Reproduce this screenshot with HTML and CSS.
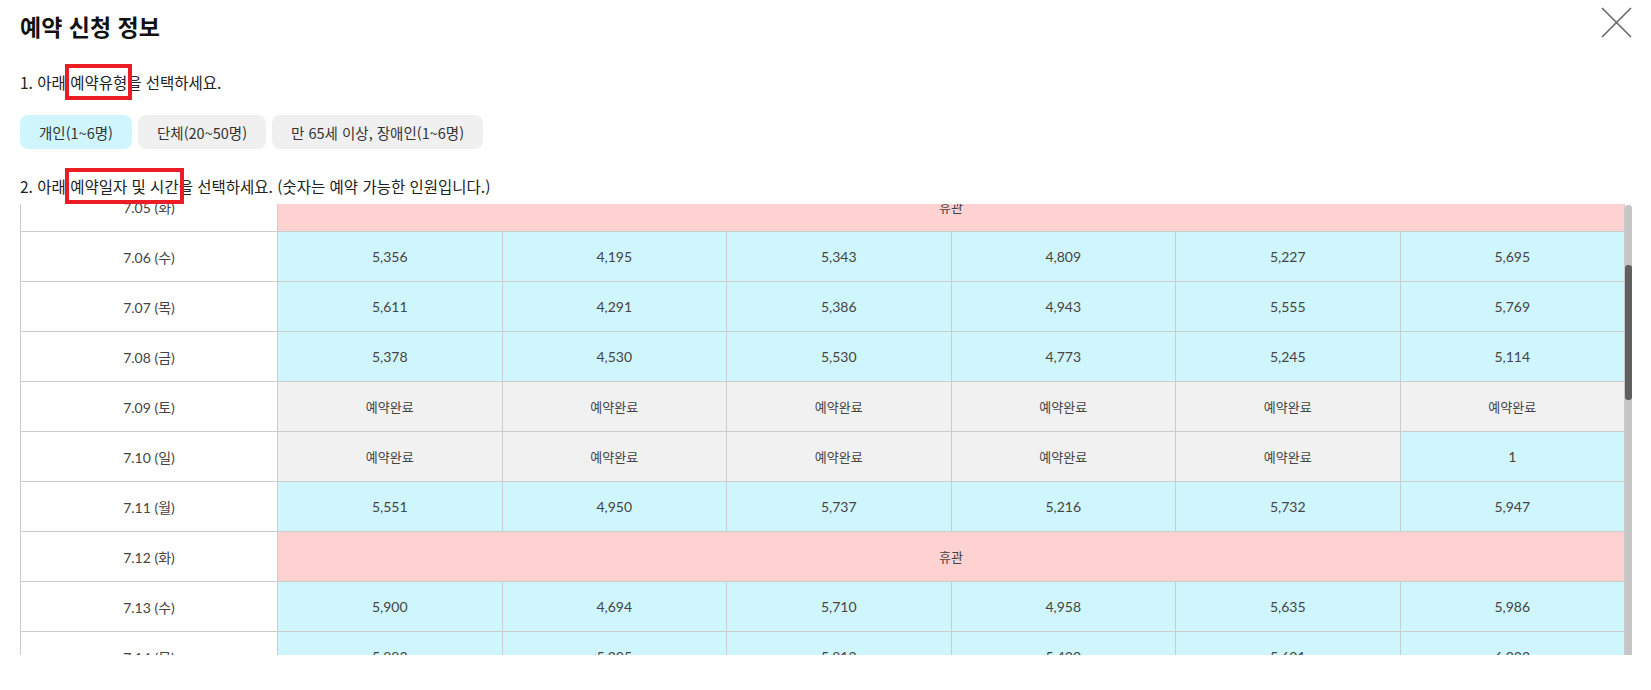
FILE: index.html
```html
<!DOCTYPE html>
<html lang="ko">
<head>
    <meta charset="UTF-8">
    <meta name="viewport" content="width=device-width, initial-scale=1.0">
    <title>예약 신청 정보</title>
    <link rel="stylesheet" href="styles.css">
</head>
<body>
    <div class="popup">
        <div class="popup-header">
            <h1>예약 신청 정보</h1>
            <button class="close-btn" type="button" aria-label="닫기">
                <svg width="31" height="31" viewBox="0 0 31 31">
                    <path d="M1 1 L30 30 M30 1 L1 30" stroke="#666" stroke-width="1.6" fill="none"/>
                </svg>
            </button>
        </div>

        <p class="step step-type">1. 아래 <span class="mark">예약유형</span>을 선택하세요.</p>

        <div class="type-tabs">
            <button type="button" class="type-btn active">개인(1~6명)</button>
            <button type="button" class="type-btn">단체(20~50명)</button>
            <button type="button" class="type-btn">만 65세 이상, 장애인(1~6명)</button>
        </div>

        <p class="step step-date">2. 아래 <span class="mark">예약일자 및 시간</span>을 선택하세요. (숫자는 예약 가능한 인원입니다.)</p>

        <div class="table-area">
            <div class="table-wrap" id="tableWrap">
                <table class="schedule">
                    <colgroup>
                        <col class="col-date">
                        <col><col><col><col><col><col>
                    </colgroup>
                    <tbody id="scheduleBody"></tbody>
                </table>
            </div>
            <div class="scrollbar">
                <div class="scrollbar-thumb"></div>
            </div>
        </div>
    </div>

    <script>
        document.addEventListener('DOMContentLoaded', function() {
            const body = document.getElementById('scheduleBody');
            const wrap = document.getElementById('tableWrap');
            const dayNames = ['일', '월', '화', '수', '목', '금', '토'];
            const X = 'x'; // 예약완료

            const fixed = {
                2: [X, X, X, X, X, X],
                3: [X, X, X, X, X, X],
                6: [5356, 4195, 5343, 4809, 5227, 5695],
                7: [5611, 4291, 5386, 4943, 5555, 5769],
                8: [5378, 4530, 5530, 4773, 5245, 5114],
                9: [X, X, X, X, X, X],
                10: [X, X, X, X, X, 1],
                11: [5551, 4950, 5737, 5216, 5732, 5947],
                13: [5900, 4694, 5710, 4958, 5635, 5986],
                14: [5883, 5205, 5813, 5420, 5601, 6022]
            };

            for (let d = 1; d <= 31; d++) {
                const dow = (5 + d - 1) % 7; // 2022.07.01 = 금
                const tr = document.createElement('tr');
                const label = '7.' + String(d).padStart(2, '0') + ' (' + dayNames[dow] + ')';
                let html = '<td class="date">' + label + '</td>';

                if (dow === 2) {
                    html += '<td class="closed" colspan="6">휴관</td>';
                } else {
                    let vals = fixed[d];
                    if (!vals) {
                        vals = [];
                        for (let i = 0; i < 6; i++) {
                            vals.push(4100 + ((d * 7919 + i * 1049) % 1900));
                        }
                    }
                    vals.forEach(function(v) {
                        if (v === X) {
                            html += '<td class="full">예약완료</td>';
                        } else {
                            html += '<td class="open">' + v.toLocaleString('en-US') + '</td>';
                        }
                    });
                }
                tr.innerHTML = html;
                body.appendChild(tr);
            }

            wrap.scrollTop = 223;
        });
    </script>
</body>
</html>
```

FILE: styles.css
```css
* {
    box-sizing: border-box;
}

body {
    margin: 0;
    padding: 0 19px 0 20px;
    background-color: #fff;
    color: #222;
    font-family: "Noto Sans CJK KR", "Noto Sans", sans-serif;
}

.popup-header {
    display: flex;
    justify-content: space-between;
    align-items: flex-start;
    padding-top: 7px;
}

h1 {
    margin: 3px 0 0;
    font-size: 23px;
    line-height: 32px;
    font-weight: 700;
    color: #111;
}

.close-btn {
    border: none;
    background: none;
    padding: 0;
    width: 31px;
    height: 31px;
    cursor: pointer;
}

.close-btn svg {
    display: block;
}

.step {
    margin: 0;
    font-size: 15.5px;
    line-height: 22px;
    color: #222;
}

.step-type {
    margin-top: 29px;
}

.step-date {
    margin-top: 26px;
}

/* red guide box */
.mark {
    padding: 2px 0;
    outline: 4px solid #ec1c24;
    outline-offset: 1px;
}

.type-tabs {
    display: flex;
    gap: 6px;
    margin-top: 22px;
}

.type-btn {
    height: 34px;
    padding: 0 19px;
    border: none;
    border-radius: 8px;
    background-color: #f0f0f0;
    color: #333;
    font-family: inherit;
    font-size: 14.5px;
    cursor: pointer;
}

.type-btn.active {
    background-color: #d0f6fd;
}

.table-area {
    display: flex;
    margin-top: 7px;
    height: 451px;
}

.table-wrap {
    flex: 1;
    overflow: hidden;
}

.scrollbar {
    width: 7px;
    margin-top: 1px;
    background-color: #c6c6c6;
    border-radius: 3px 3px 0 0;
}

.scrollbar-thumb {
    margin-top: 60px;
    height: 135px;
    background-color: #606060;
    border-radius: 3px;
}

.schedule {
    width: 100%;
    table-layout: fixed;
    border-collapse: collapse;
    font-family: Lato, "Noto Sans CJK KR", sans-serif;
    font-size: 14px;
    color: #444;
}

.col-date {
    width: 257px;
}

.schedule tr {
    height: 50px;
}

.schedule td {
    border: 1px solid #cccccc;
    text-align: center;
    vertical-align: middle;
    padding: 0;
}

.schedule td.date {
    background-color: #fff;
}

.schedule td.open {
    background-color: #d0f6fd;
}

.schedule td.full {
    background-color: #f1f1f1;
    font-size: 13px;
}

.schedule td.closed {
    background-color: #ffd2d2;
    font-size: 13px;
}
```
